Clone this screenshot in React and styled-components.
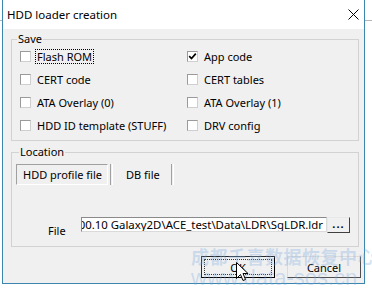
import React from "react";
import styled, { createGlobalStyle } from "styled-components";

const Global = createGlobalStyle`
  html, body { margin: 0; padding: 0; height: 100%; }
  body {
    background: #ffffff linear-gradient(to bottom, transparent 20px, #b4b4b4 20px, #b4b4b4 21px, transparent 21px);
    font-family: "Noto Sans", "Open Sans", sans-serif;
    font-size: 11px;
    color: #000;
    overflow: hidden;
  }
  #root { position: relative; }
`;

const Window = styled.div`
  position: relative;
  margin-left: 2px;
  width: 363px;
  height: 284px;
  box-sizing: border-box;
  border: 1px solid #3b85ae;
  border-top: none;
  display: flex;
  flex-direction: column;
  background: #f0f0f0;
`;

const TitleBar = styled.div`
  height: 29px;
  flex: none;
  background: #fff;
  display: flex;
  align-items: center;
  justify-content: space-between;
  padding: 0 5px 0 4px;
  font-size: 11.5px;
`;

const Content = styled.div`
  flex: 1;
  display: flex;
  flex-direction: column;
  padding: 4px 3px 0 8px;
`;

const Group = styled.fieldset`
  margin: ${(p) => p.$top || 0}px 2px 0 0;
  padding: ${(p) => p.$pad};
  border: 1px solid #d2d2d2;
  min-width: 0;
`;

const Legend = styled.legend`
  padding: 0 1px;
  margin-left: ${(p) => p.$shift}px;
  line-height: 12px;
`;

const CheckGrid = styled.div`
  display: grid;
  grid-template-columns: 167px 1fr;
  grid-auto-rows: 23px;
`;

const CheckRow = styled.div`
  display: flex;
  align-items: center;
  gap: 4px;
`;

const Box = styled.span`
  width: 11px;
  height: 11px;
  box-sizing: border-box;
  flex: none;
  background: #fff;
  border: 1px solid #9a9a9a;
  border-right-color: #cfcfcf;
  border-bottom-color: #cfcfcf;
  display: flex;
  align-items: center;
  justify-content: center;
`;

const CheckLabel = styled.span`
  border: 1px dotted ${(p) => (p.$focus ? "#000" : "transparent")};
  padding: 0 1px;
  line-height: 13px;
  white-space: nowrap;
`;

const Tabs = styled.div`
  display: flex;
  align-items: stretch;
  height: 21px;
`;

const Tab = styled.div`
  box-sizing: border-box;
  display: flex;
  align-items: center;
  padding: ${(p) => (p.$selected ? "0 5px 0 6px" : "0 10px 0 12px")};
  border: 1px solid ${(p) => (p.$selected ? "#a0a0a0" : "transparent")};
  border-right-color: ${(p) => (p.$selected ? "#fff" : "transparent")};
  border-bottom-color: ${(p) => (p.$selected ? "#fff" : "transparent")};
  white-space: nowrap;
`;

const Sep = styled.div`
  width: 1px;
  border-left: 1px solid #a0a0a0;
  border-right: 1px solid #fff;
  margin-left: ${(p) => p.$ml || 0}px;
`;

const FileRow = styled.div`
  display: flex;
  align-items: flex-start;
  margin-top: 32px;
`;

const FileLabel = styled.span`
  width: 65px;
  padding-left: 32px;
  box-sizing: border-box;
  margin-top: 7px;
  line-height: 13px;
`;

const Field = styled.div`
  width: 246px;
  height: 15px;
  box-sizing: border-box;
  background: #fff;
  border: 1px solid #8a8a8a;
  border-right-color: #dadada;
  border-bottom-color: #dadada;
  overflow: hidden;
  display: flex;
  justify-content: flex-end;
  align-items: center;
  padding-right: 3px;
  white-space: nowrap;
  line-height: 13px;
  font-size: 11.4px;
`;

const Browse = styled.div`
  width: 23px;
  height: 16px;
  box-sizing: border-box;
  border: 1px solid #e8e8e8;
  border-right-color: #404040;
  border-bottom-color: #404040;
  background: #f0f0f0;
  display: flex;
  align-items: center;
  justify-content: center;
  font-weight: bold;
  letter-spacing: 1px;
  line-height: 10px;
  padding-bottom: 3px;
`;

const ButtonRow = styled.div`
  display: flex;
  justify-content: flex-end;
  gap: 12px;
  margin-top: 9px;
`;

const Button = styled.div`
  width: 74px;
  height: 22px;
  box-sizing: border-box;
  border: 1px solid ${(p) => (p.$default ? "#2a2a2a" : "#dcdcdc")};
  border-right-color: ${(p) => (p.$default ? "#000" : "#505050")};
  border-bottom-color: ${(p) => (p.$default ? "#000" : "#505050")};
  background: #f0f0f0;
  display: flex;
  align-items: center;
  justify-content: center;
  padding: 2px;
`;

const Focus = styled.span`
  flex: 1;
  align-self: stretch;
  display: flex;
  align-items: center;
  justify-content: center;
  border: 1px dotted ${(p) => (p.$on ? "#333" : "transparent")};
`;

const Watermark = styled.div`
  position: absolute;
  left: 188px;
  top: 247px;
  color: rgba(120, 170, 225, 0.33);
  pointer-events: none;
  line-height: 1;
`;

const WmCn = styled.div`
  font-family: "Noto Sans CJK SC", sans-serif;
  font-size: 18px;
  font-weight: bold;
  letter-spacing: 0.5px;
  white-space: nowrap;
`;

const WmUrl = styled.div`
  font-family: "Liberation Sans", Arial, sans-serif;
  font-size: 22px;
  margin-top: 2px;
  white-space: nowrap;
`;

const Cursor = styled.svg`
  position: absolute;
  left: 236px;
  top: 262px;
`;

const Check = ({ label, checked, focus }) => (
  <CheckRow>
    <Box>
      {checked && (
        <svg width="9" height="9" viewBox="0 0 9 9">
          <path d="M1.2 4.2 L3.5 6.6 L7.8 1.6" stroke="#000" strokeWidth="1.7" fill="none" />
        </svg>
      )}
    </Box>
    <CheckLabel $focus={focus}>{label}</CheckLabel>
  </CheckRow>
);

export default function App() {
  return (
    <>
      <Global />
      <Window>
        <TitleBar>
          <span>HDD loader creation</span>
          <svg width="11" height="11" viewBox="0 0 11 11">
            <path d="M0.5 0.5 L10.5 10.5 M10.5 0.5 L0.5 10.5" stroke="#000" strokeWidth="1" />
          </svg>
        </TitleBar>
        <Content>
          <Group $pad="0 8px 3px 8px">
            <Legend $shift={-3}>Save</Legend>
            <CheckGrid>
              <Check label="Flash ROM" focus />
              <Check label="App code" checked />
              <Check label="CERT code" />
              <Check label="CERT tables" />
              <Check label="ATA Overlay (0)" />
              <Check label="ATA Overlay (1)" />
              <Check label="HDD ID template (STUFF)" />
              <Check label="DRV config" />
            </CheckGrid>
          </Group>
          <Group $top={5} $pad="6px 4px 9px 4px">
            <Legend $shift={3}>Location</Legend>
            <Tabs>
              <Tab $selected>HDD profile file</Tab>
              <Sep $ml={2} />
              <Tab>DB file</Tab>
              <Sep />
            </Tabs>
            <FileRow>
              <FileLabel>File</FileLabel>
              <Field>D:\Tools\PC-3000\200.10 Galaxy2D\ACE_test\Data\LDR\SgLDR.ldr</Field>
              <Browse>...</Browse>
            </FileRow>
          </Group>
          <ButtonRow>
            <Button $default>
              <Focus $on>OK</Focus>
            </Button>
            <Button>
              <Focus>Cancel</Focus>
            </Button>
          </ButtonRow>
        </Content>
        <Watermark>
          <WmCn>成都千喜数据恢复中心</WmCn>
          <WmUrl>www.data-sos.cn</WmUrl>
        </Watermark>
      </Window>
      <Cursor width="13" height="21" viewBox="0 0 13 21">
        <path d="M0.5 0.5 L0.5 16.5 L4.5 12.5 L7 18.5 L9.5 17.5 L7 11.5 L12 11.5 Z" fill="#fff" stroke="#000" strokeWidth="1" />
      </Cursor>
    </>
  );
}
